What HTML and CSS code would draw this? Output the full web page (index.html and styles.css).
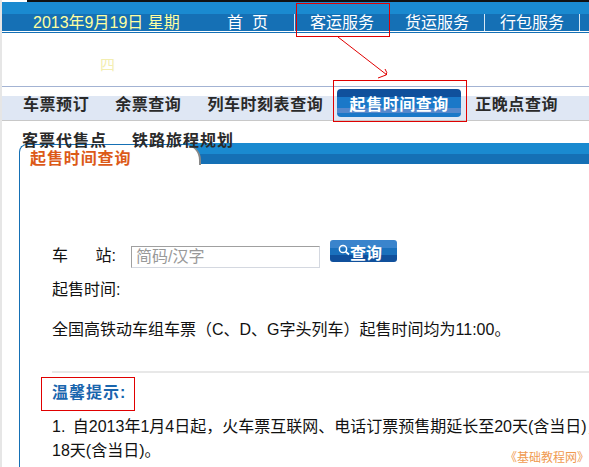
FILE: index.html
```html
<!DOCTYPE html>
<html lang="zh-CN">
<head>
<meta charset="UTF-8">
<title>起售时间查询</title>
<link rel="stylesheet" href="styles.css">
</head>
<body>
<div class="topline"></div>
<header class="mainbar">
  <div class="date">2013年9月19日 星期</div>
  <a class="home">首&nbsp;&nbsp;页</a>
  <a class="item">客运服务</a>
  <a class="item">货运服务</a>
  <a class="item">行包服务</a>
  <a class="item item-last"></a>
</header>
<div class="weekday"><span>四</span></div>
<nav class="subnav">
  <a class="sub">车票预订</a>
  <a class="sub">余票查询</a>
  <a class="sub">列车时刻表查询</a>
  <a class="sub sub-active">起售时间查询</a>
  <a class="sub">正晚点查询</a>
</nav>
<nav class="subnav2">
  <a>客票代售点</a>
  <a>铁路旅程规划</a>
</nav>
<section class="panel">
  <div class="panel-head">
    <h2 class="tab">起售时间查询</h2>
    <div class="tab-fill"></div>
  </div>
  <div class="panel-body">
    <div class="search">
      <label class="station"><span>车</span><span>站:</span></label>
      <input class="station-input" type="text" placeholder="简码/汉字">
      <button class="search-btn" type="button">
        <svg width="12" height="12" viewBox="0 0 12 12"><circle cx="5" cy="5" r="3.6" fill="none" stroke="#fff" stroke-width="1.5"/><path d="M7.6 7.6L11 10.5" stroke="#fff" stroke-width="1.8"/></svg><span class="search-text">查询</span>
      </button>
    </div>
    <p class="sale-label">起售时间:</p>
    <p class="sale-text">全国高铁动车组车票（C、D、G字头列车）起售时间均为11:00。</p>
    <hr class="rule">
    <h3 class="tips">温馨提示:</h3>
    <p class="tip-line">1. 自2013年1月4日起，火车票互联网、电话订票预售期延长至20天(含当日)<span class="cut-comma">，</span><br>18天(含当日)。</p>
  </div>
</section>

<!-- red annotations drawn on the screenshot -->
<div class="mark mark-service"></div>
<div class="mark mark-active"></div>
<div class="mark mark-tips"></div>
<svg class="arrow" width="52" height="44" viewBox="0 0 52 44"><path d="M0 0L49 38M47 32Q50 36 48 38L40 41" fill="none" stroke="#e00000" stroke-width="1"/></svg>
<div class="watermark">《基础教程网》</div>
</body>
</html>
```

FILE: styles.css
```css
html, body {margin: 0; padding: 0; height: 467px; overflow: hidden;}
body {
  position: relative;
  font-family: "Liberation Sans", "Noto Sans CJK SC", sans-serif;
  font-size: 16px;
  color: #111;
  background: #fff;
  border-left: 2px solid #e6e6e6;
}

.topline {height: 2px; margin-left: 25px; background: #111;}

.mainbar {
  display: flex;
  height: 17px;
  padding-top: 12px;
  line-height: 17px;
  font-size: 16px;
  color: #fff;
  background: linear-gradient(#1a8ad0 12px, #1570b5 12px);
  border-bottom: 1px solid #fff;
  box-shadow: 0 1px 0 #1570b5;
}
.date {flex: none; width: 193px; padding-left: 31px; box-sizing: border-box; color: #ffffa0; white-space: nowrap;}
.home {flex: none; width: 99px; padding-left: 32px; box-sizing: border-box; white-space: nowrap;}
.item {flex: none; width: 95px; text-align: center; border-left: 1px solid #d8e8f4; box-sizing: border-box;}
.item-last {flex: 1; width: auto;}

.weekday {height: 55px; padding: 25px 0 0 98px; box-sizing: border-box; border-bottom: 1px solid #a3b3d3; font-size: 15px; line-height: 16px; color: #f3eeb0;}

.subnav {
  display: flex;
  align-items: flex-start;
  height: 24px;
  margin-top: 9px;
  padding-left: 21px;
  background: #dfe7f4;
  border-bottom: 1px solid #c8c8c8;
}
.sub {margin-right: 26px; font-size: 16px; line-height: 18px; letter-spacing: .55px; font-weight: bold; color: #2a2a2a; white-space: nowrap;}
.sub-active {
  width: 124px;
  height: 28px;
  margin: -7px 14px 0 -12px;
  line-height: 32px;
  text-align: center;
  color: #fff;
  border-radius: 4px;
  background: linear-gradient(#10509c 0, #10509c 8px, #1a78c8 8px, #1a78c8 19px, #5588cc 19px, #5588cc 24px, #1a78c8 24px);
}

.subnav2 {display: flex; gap: 25px; padding: 10px 0 4px 20px; line-height: 20px; position: relative; z-index: 2;}
.subnav2 a {font-size: 16px; letter-spacing: 1px; font-weight: bold; color: #2a2a2a;}

.panel {margin: -12px 0 0 17px;}
.panel-head {display: flex; height: 21px;}
.tab {
  position: relative;
  z-index: 1;
  flex: none;
  width: 182px;
  height: 21px;
  margin: 1px 0 0;
  padding-left: 10px;
  box-sizing: border-box;
  font-size: 16px;
  letter-spacing: .9px;
  line-height: 28px;
  color: #dc5a18;
  background: #fff;
  border-top: 1px solid #1570b5;
  border-left: 1px solid #1570b5;
  border-right: 2px solid #888;
  border-radius: 8px 16px 0 0;
}
.tab-fill {flex: 1; margin-left: -18px; background: linear-gradient(#1a8ad0 11px, #1570b5 11px);}

.panel-body {height: 320px; padding: 76px 0 0 32px; border-left: 1px solid #1570b5; box-sizing: border-box; overflow: hidden;}

.search {display: flex; align-items: flex-start; height: 28px;}
.station {display: flex; justify-content: space-between; flex: none; width: 79px; padding-right: 15px; box-sizing: border-box; line-height: 20px; margin-top: 6px;}
.station-input {
  width: 189px;
  height: 22px;
  padding: 0 4px;
  box-sizing: border-box;
  margin: 6px 0 0;
  font: 16px "Liberation Sans", "Noto Sans CJK SC", sans-serif;
  border: 1px solid #d4d8e0;
  border-left-color: #a0a0a0;
  border-top-color: #a0a0a0;
}
.station-input::placeholder {color: #999;}
.search-btn {
  display: flex;
  align-items: flex-start;
  width: 67px;
  height: 22px;
  margin-left: 10px;
  padding: 0 0 0 8px;
  box-sizing: border-box;
  border: 0;
  border-radius: 3px;
  font: bold 16px "Liberation Sans", "Noto Sans CJK SC", sans-serif;
  color: #fff;
  overflow: hidden;
  background: linear-gradient(#3a84cc 0, #3a84cc 8px, #1a70bc 8px, #1a70bc 15px, #10509c 15px);
}
.search-btn svg {flex: none; margin-top: 4px;}
.search-text {line-height: 28px;}

.sale-label {margin: 12px 0 0; line-height: 20px;}
.sale-text {margin: 20px 0 0; line-height: 20px; white-space: nowrap;}
.rule {height: 2px; margin: 31px 0 0; background: #e8e8e8; border: 0;}
.tips {margin: 8px 0 0; font-size: 16px; letter-spacing: 1px; line-height: 24px; color: #1a66ae;}
.tip-line {margin: 10px 0 0; line-height: 24px; white-space: nowrap; word-spacing: 3px;}
.cut-comma {display: inline-block; width: 2px; height: 24px; overflow: hidden; vertical-align: bottom;}

.mark {position: absolute; border: 1px solid #e00000; box-sizing: border-box; pointer-events: none;}
.mark-service {left: 294px; top: 3px; width: 94px; height: 34px;}
.mark-active {left: 331px; top: 80px; width: 134px; height: 42px;}
.mark-tips {left: 39px; top: 377px; width: 94px; height: 34px;}
.arrow {position: absolute; left: 336px; top: 37px;}

.watermark {position: absolute; right: 0; bottom: 1px; font-size: 12px; line-height: 16px; color: #f09a50;}
```
